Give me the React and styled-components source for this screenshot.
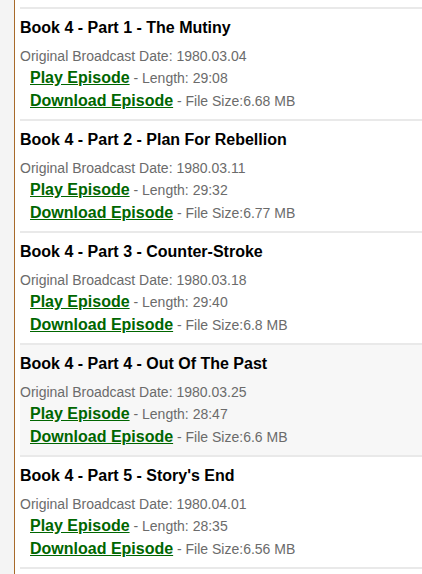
import React from 'react'
import styled, { createGlobalStyle } from 'styled-components'

const GlobalStyle = createGlobalStyle`
  html, body {
    margin: 0;
    padding: 0;
    background: #fff;
    font-family: "Liberation Sans", Arial, sans-serif;
  }
`

const Page = styled.div`
  display: flex;
  min-height: 574px;
`

const Gutter = styled.div`
  width: 14px;
  background: #f4f4f4;
  border-right: 1px solid #a86a2a;
  flex-shrink: 0;
`

const Main = styled.div`
  flex: 1;
  padding: 7px 0 0 5px;
`

const Episode = styled.div`
  border-top: 2px solid #e9e9e9;
  padding: 9px 0 0 0;
  height: 112px;
  box-sizing: border-box;
  background: ${props => (props.hover ? '#f7f7f7' : '#fff')};
  &:last-child {
    height: 114px;
    border-bottom: 2px solid #e9e9e9;
  }
`

const Title = styled.h3`
  margin: 0;
  font-size: 16px;
  font-weight: bold;
  color: #000;
  line-height: 19px;
`

const Date = styled.div`
  margin-top: 11px;
  font-size: 14px;
  color: #6b6b6b;
  line-height: 16px;
`

const LinkRow = styled.div`
  padding-left: 10px;
  margin-top: ${props => props.gap}px;
  font-size: 14px;
  color: #6b6b6b;
  line-height: 19px;
`

const EpLink = styled.a`
  color: #006600;
  font-weight: bold;
  font-size: 16px;
  text-decoration: underline;
  cursor: pointer;
`

const episodes = [
  { part: 1, name: 'The Mutiny', date: '1980.03.04', length: '29:08', size: '6.68 MB' },
  { part: 2, name: 'Plan For Rebellion', date: '1980.03.11', length: '29:32', size: '6.77 MB' },
  { part: 3, name: 'Counter-Stroke', date: '1980.03.18', length: '29:40', size: '6.8 MB' },
  { part: 4, name: 'Out Of The Past', date: '1980.03.25', length: '28:47', size: '6.6 MB', hover: true },
  { part: 5, name: "Story's End", date: '1980.04.01', length: '28:35', size: '6.56 MB' },
]

const App = () => {
  return (
    <Page>
      <GlobalStyle />
      <Gutter />
      <Main>
        {episodes.map(ep => (
          <Episode key={ep.part} hover={ep.hover}>
            <Title>Book 4 - Part {ep.part} - {ep.name}</Title>
            <Date>Original Broadcast Date: {ep.date}</Date>
            <LinkRow gap={4}>
              <EpLink>Play Episode</EpLink> - Length: {ep.length}
            </LinkRow>
            <LinkRow gap={3}>
              <EpLink>Download Episode</EpLink> - File Size:{ep.size}
            </LinkRow>
          </Episode>
        ))}
      </Main>
    </Page>
  )
}

export default App
